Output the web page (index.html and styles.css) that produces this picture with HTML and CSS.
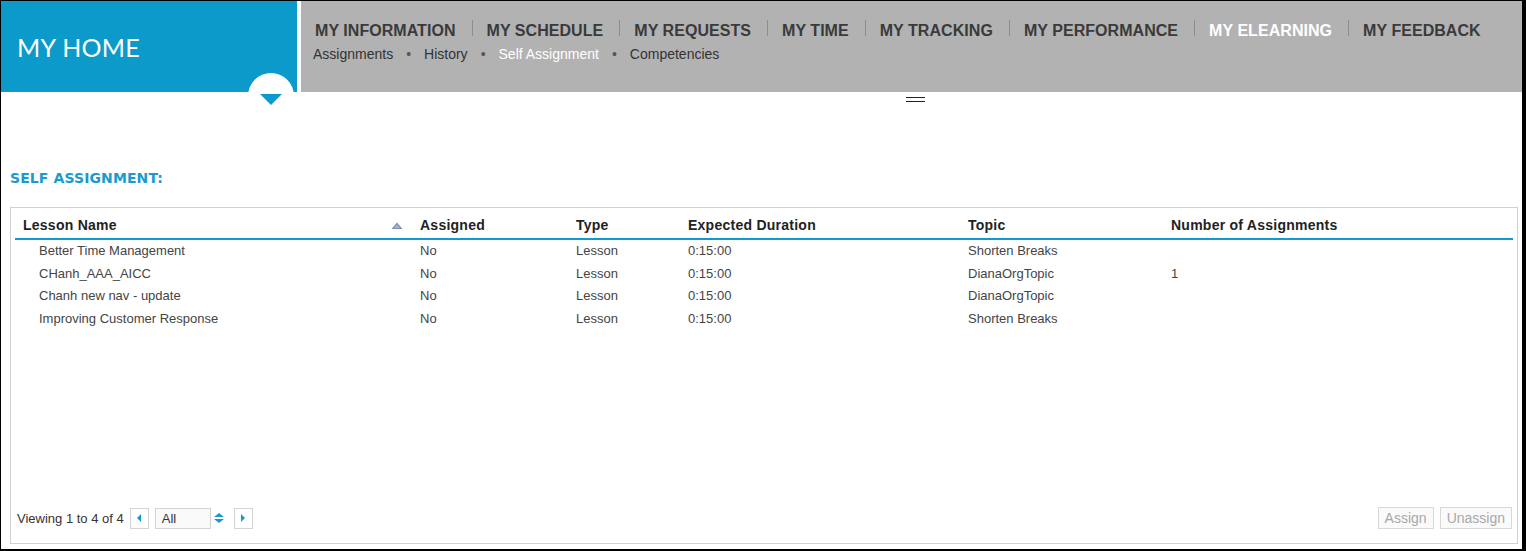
FILE: index.html
```html
<!DOCTYPE html>
<html lang="en">
<head>
    <meta charset="UTF-8">
    <title>My Home - Self Assignment</title>
    <link rel="stylesheet" href="styles.css">
</head>
<body>
    <div class="frame">
        <header class="top">
            <div class="brand">
                <span class="brand-title">MY HOME</span>
                <div class="brand-toggle"><span class="caret"></span></div>
            </div>
            <nav class="nav">
                <ul class="menu">
                    <li>MY INFORMATION</li>
                    <li>MY SCHEDULE</li>
                    <li>MY REQUESTS</li>
                    <li>MY TIME</li>
                    <li>MY TRACKING</li>
                    <li>MY PERFORMANCE</li>
                    <li class="active">MY ELEARNING</li>
                    <li>MY FEEDBACK</li>
                </ul>
                <ul class="submenu">
                    <li>Assignments</li>
                    <li>History</li>
                    <li class="active">Self Assignment</li>
                    <li>Competencies</li>
                </ul>
            </nav>
        </header>

        <main class="content">
            <div class="handle"></div>
            <h3 class="section-title">SELF ASSIGNMENT:</h3>

            <div class="panel">
                <table class="grid">
                    <colgroup>
                        <col style="width:397px">
                        <col style="width:156px">
                        <col style="width:112px">
                        <col style="width:280px">
                        <col style="width:203px">
                        <col>
                    </colgroup>
                    <thead>
                        <tr>
                            <th class="sorted">Lesson Name
                                <svg class="sort-icon" width="12" height="8" viewBox="0 0 12 8"><polygon points="6,0.5 11.5,7 0.5,7" fill="#7c8db4"/><polygon points="6,2.5 9,6 3,6" fill="#a9b6d2"/></svg>
                            </th>
                            <th>Assigned</th>
                            <th>Type</th>
                            <th>Expected Duration</th>
                            <th>Topic</th>
                            <th>Number of Assignments</th>
                        </tr>
                    </thead>
                    <tbody>
                        <tr>
                            <td>Better Time Management</td>
                            <td>No</td>
                            <td>Lesson</td>
                            <td>0:15:00</td>
                            <td>Shorten Breaks</td>
                            <td></td>
                        </tr>
                        <tr>
                            <td>CHanh_AAA_AICC</td>
                            <td>No</td>
                            <td>Lesson</td>
                            <td>0:15:00</td>
                            <td>DianaOrgTopic</td>
                            <td>1</td>
                        </tr>
                        <tr>
                            <td>Chanh new nav - update</td>
                            <td>No</td>
                            <td>Lesson</td>
                            <td>0:15:00</td>
                            <td>DianaOrgTopic</td>
                            <td></td>
                        </tr>
                        <tr>
                            <td>Improving Customer Response</td>
                            <td>No</td>
                            <td>Lesson</td>
                            <td>0:15:00</td>
                            <td>Shorten Breaks</td>
                            <td></td>
                        </tr>
                    </tbody>
                </table>

                <div class="pager">
                    <div class="pager-left">
                        <span class="viewing">Viewing 1 to 4 of 4</span>
                        <button type="button" class="page-btn"><span class="tri-left"></span></button>
                        <div class="page-size">All</div>
                        <span class="spinner"><span class="tri-up"></span><span class="tri-down"></span></span>
                        <button type="button" class="page-btn"><span class="tri-right"></span></button>
                    </div>
                    <div class="pager-right">
                        <button type="button" class="action-btn" disabled>Assign</button>
                        <button type="button" class="action-btn" disabled>Unassign</button>
                    </div>
                </div>
            </div>
        </main>
    </div>
</body>
</html>
```

FILE: styles.css
```css
* {
    box-sizing: border-box;
}
html, body {
    margin: 0;
    padding: 0;
}
body {
    background: #000;
    font-family: "Liberation Sans", Arial, sans-serif;
    color: #444;
}
.frame {
    width: 1526px;
    height: 551px;
    border-style: solid;
    border-color: #000;
    border-width: 1px 4px 2px 1px;
    background: #fff;
    display: flex;
    flex-direction: column;
}

/* header */
.top {
    display: flex;
    height: 91px;
    flex-shrink: 0;
}
.brand {
    position: relative;
    width: 296px;
    background: #0c9aca;
    padding: 31px 0 0 16px;
}
.brand-title {
    font-family: "Lato", "Open Sans", sans-serif;
    font-size: 25px;
    color: #fff;
    letter-spacing: 0.3px;
}
.brand-toggle {
    position: absolute;
    left: 247px;
    top: 72px;
    width: 46px;
    height: 46px;
    border-radius: 50%;
    background: #fff;
}
.caret {
    position: absolute;
    left: 12px;
    top: 21px;
    width: 0;
    height: 0;
    border-left: 11px solid transparent;
    border-right: 11px solid transparent;
    border-top: 11px solid #0c9aca;
}
.nav {
    flex: 1;
    margin-left: 4px;
    background: #b2b2b2;
    padding: 20px 0 0 14px;
}
.menu, .submenu {
    list-style: none;
    margin: 0;
    padding: 0;
    display: flex;
}
.menu li {
    position: relative;
    font-size: 16px;
    font-weight: bold;
    line-height: 20px;
    letter-spacing: 0.05px;
    color: #3a3a3a;
    padding: 0 16px 0 0;
}
.menu li + li {
    padding-left: 15px;
}
.menu li + li::before {
    content: "";
    position: absolute;
    left: 0;
    top: -1px;
    height: 16px;
    border-left: 1px solid #8e8e8e;
}
.menu li.active,
.submenu li.active {
    color: #fff;
}
.submenu {
    margin: 4px 0 0 -2px;
}
.submenu li {
    font-size: 14px;
    line-height: 18px;
    color: #333;
}
.submenu li + li::before {
    content: "\2022";
    color: #555;
    margin: 0 13px 0 13px;
}

/* content */
.content {
    flex: 1;
    display: flex;
    flex-direction: column;
    padding: 0 4px 5px 9px;
}
.handle {
    width: 19px;
    height: 5px;
    margin: 5px 0 0 896px;
    border-top: 1px solid #222;
    border-bottom: 1px solid #222;
}
.section-title {
    margin: 68px 0 0 0;
    font-family: "DejaVu Sans", Verdana, sans-serif;
    font-size: 14px;
    line-height: 16px;
    font-weight: bold;
    color: #1a9ad0;
    letter-spacing: 0.1px;
}
.panel {
    flex: 1;
    margin-top: 21px;
    border: 1px solid #d2d2d2;
    padding: 4px 4px 14px 4px;
    display: flex;
    flex-direction: column;
}
.grid {
    width: 100%;
    border-collapse: collapse;
    table-layout: fixed;
}
.grid th {
    height: 27px;
    padding: 0 8px;
    text-align: left;
    font-size: 14px;
    font-weight: bold;
    letter-spacing: 0.25px;
    color: #222;
    border-bottom: 2px solid #0f9ad0;
    vertical-align: middle;
    white-space: nowrap;
}
.grid th.sorted {
    position: relative;
}
.sort-icon {
    position: absolute;
    right: 9px;
    top: 10px;
}
.grid td {
    height: 22.7px;
    padding: 0 8px;
    font-size: 13px;
    color: #444;
    vertical-align: middle;
    white-space: nowrap;
}
.grid td:first-child {
    padding-left: 24px;
}

/* pager */
.pager {
    margin-top: auto;
    display: flex;
    justify-content: space-between;
    align-items: center;
    padding: 0 1px 0 2px;
}
.pager-left {
    display: flex;
    align-items: center;
}
.viewing {
    font-size: 13px;
    color: #333;
    margin-right: 6px;
}
.page-btn {
    width: 19px;
    height: 21px;
    padding: 0;
    border: 1px solid #d4d4d4;
    background: #fff;
    display: flex;
    align-items: center;
    justify-content: center;
}
.tri-left, .tri-right {
    width: 0;
    height: 0;
    border-top: 4px solid transparent;
    border-bottom: 4px solid transparent;
}
.tri-left {
    border-right: 4px solid #1b98cf;
}
.tri-right {
    border-left: 4px solid #1b98cf;
}
.page-size {
    width: 56px;
    height: 21px;
    margin-left: 6px;
    border: 1px solid #d4d4d4;
    background: #fafafa;
    font-size: 13px;
    color: #333;
    line-height: 19px;
    padding-left: 6px;
}
.spinner {
    display: flex;
    flex-direction: column;
    gap: 2px;
    margin: 0 10px 0 3px;
}
.tri-up, .tri-down {
    width: 0;
    height: 0;
    border-left: 5px solid transparent;
    border-right: 5px solid transparent;
}
.tri-up {
    border-bottom: 4px solid #1b98cf;
}
.tri-down {
    border-top: 4px solid #1b98cf;
}
.pager-right {
    display: flex;
    gap: 6px;
}
.action-btn {
    height: 22px;
    padding: 0 6px;
    font-family: "Liberation Sans", Arial, sans-serif;
    font-size: 14px;
    color: #a8a8a8;
    background: #fafafa;
    border: 1px solid #d8d8d8;
}
```
